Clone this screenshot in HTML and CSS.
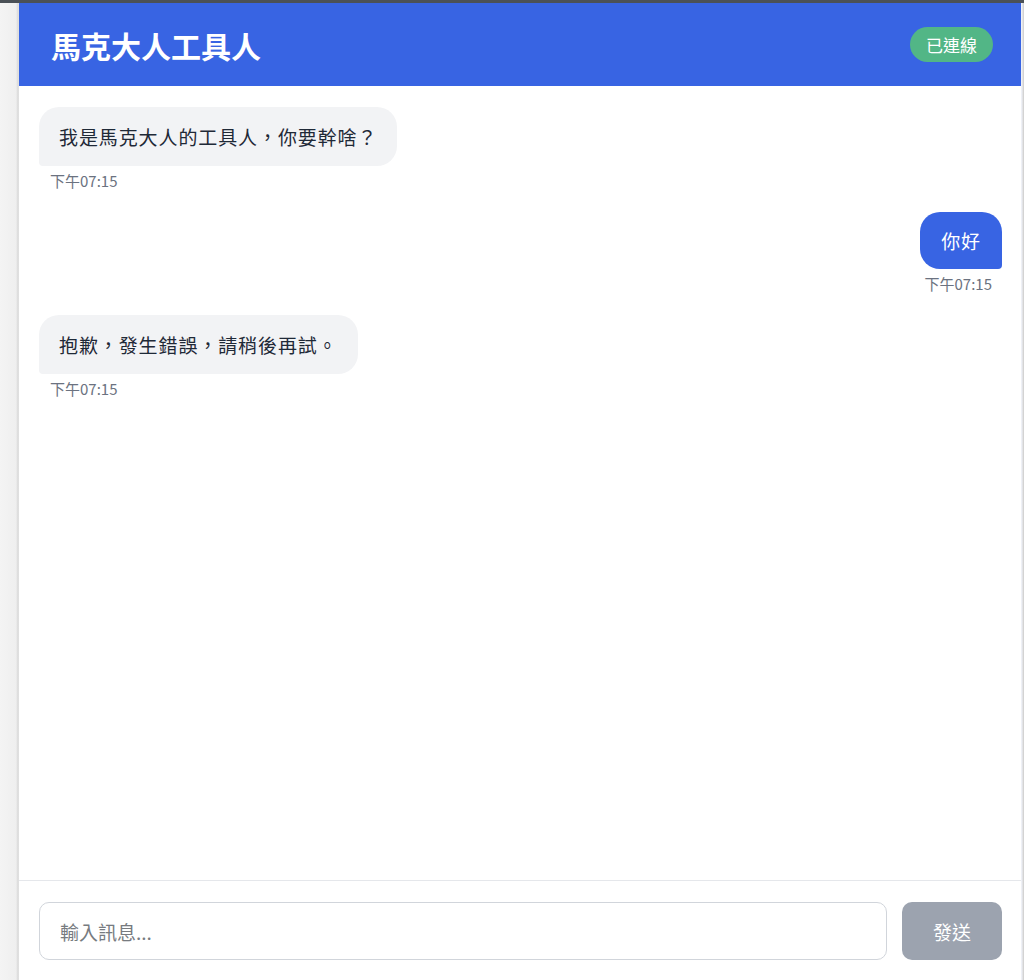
FILE: index.html
```html
<!DOCTYPE html>
<html lang="zh-Hant">
<head>
<meta charset="utf-8">
<title>馬克大人工具人</title>
<link rel="stylesheet" href="styles.css">
</head>
<body>
<div class="topline"></div>
<div class="page">
  <aside class="gutter"></aside>
  <main class="chat">
    <header class="chat-header">
      <h1 class="title">馬克大人工具人</h1>
      <span class="status">已連線</span>
    </header>
    <section class="messages">
      <div class="msg bot">
        <div class="bubble">我是馬克大人的工具人，你要幹啥？</div>
        <div class="time">下午07:15</div>
      </div>
      <div class="msg user">
        <div class="bubble">你好</div>
        <div class="time">下午07:15</div>
      </div>
      <div class="msg bot">
        <div class="bubble">抱歉，發生錯誤，請稍後再試。</div>
        <div class="time">下午07:15</div>
      </div>
    </section>
    <form class="composer">
      <input class="field" type="text" placeholder="輸入訊息...">
      <button class="send" type="button">發送</button>
    </form>
  </main>
  <div class="edge"></div>
</div>
</body>
</html>
```

FILE: styles.css
```css
* { box-sizing: border-box; }

html, body {
  margin: 0;
  padding: 0;
  height: 100%;
}

body {
  background: #f3f3f3;
  font-family: "Noto Sans CJK TC", "Noto Sans", sans-serif;
  color: #1f2937;
  display: flex;
  flex-direction: column;
}

.topline {
  height: 3px;
  background: #4b5157;
  flex: none;
}

.page {
  flex: 1;
  display: flex;
  min-height: 0;
}

.gutter {
  width: 19px;
  flex: none;
  background: linear-gradient(to right, #f4f4f4 0, #efefef 16px, #d9d9d9 18px, #e6e6e6 19px);
}

.edge {
  width: 3px;
  flex: none;
  background: linear-gradient(to right, #eef0f6 0, #eef0f6 1px, #d7d7d7 2px, #cfcfcf 3px);
}

.chat {
  flex: 1;
  display: flex;
  flex-direction: column;
  background: #ffffff;
  min-width: 0;
}

.chat-header {
  height: 83px;
  flex: none;
  background: #3864e3;
  display: flex;
  align-items: center;
  justify-content: space-between;
  padding: 0 28px 0 32px;
}

.title {
  margin: 0;
  color: #ffffff;
  font-size: 30px;
  font-weight: 700;
  line-height: 1;
}

.status {
  background: #52b686;
  color: #ffffff;
  font-size: 17px;
  height: 35px;
  line-height: 35px;
  padding: 0 16px;
  border-radius: 18px;
}

.messages {
  flex: 1;
  padding: 21px 19px 0 20px;
  display: flex;
  flex-direction: column;
}

.msg {
  display: flex;
  flex-direction: column;
  margin-bottom: 21px;
}

.msg.bot { align-items: flex-start; }
.msg.user { align-items: flex-end; }

.bubble {
  font-size: 19px;
  line-height: 29px;
  padding: 15px 20px;
  letter-spacing: 0.9px;
}

.bot .bubble {
  background: #f2f3f5;
  color: #1f2937;
  border-radius: 20px 20px 20px 4px;
}

.user .bubble {
  background: #3864e3;
  color: #ffffff;
  border-radius: 20px 20px 4px 20px;
  padding: 14px 21px;
}

.time {
  margin-top: 5px;
  font-size: 15px;
  line-height: 20px;
  color: #6b7280;
  padding: 0 11px;
}

.user .time { padding: 0 10px; }

.composer {
  flex: none;
  margin: 0;
  border-top: 1px solid #e5e7eb;
  padding: 21px 19px 20px 20px;
  display: flex;
  gap: 15px;
}

.field {
  flex: 1;
  height: 58px;
  border: 1px solid #d1d5db;
  border-radius: 10px;
  padding: 0 20px;
  font-family: "Noto Sans CJK TC", "Noto Sans", sans-serif;
  font-size: 19px;
  color: #1f2937;
  background: #ffffff;
  outline: none;
}

.field::placeholder { color: #777b80; }

.send {
  width: 100px;
  height: 58px;
  border: none;
  border-radius: 10px;
  background: #9ca3af;
  color: #ffffff;
  font-family: "Noto Sans CJK TC", "Noto Sans", sans-serif;
  font-size: 19px;
}
```
